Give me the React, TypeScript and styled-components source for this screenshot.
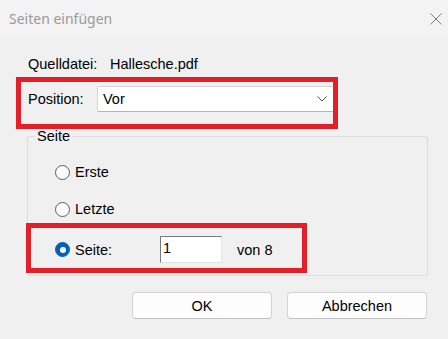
import styled, { createGlobalStyle } from "styled-components";

const GlobalStyle = createGlobalStyle`
  html, body {
    margin: 0;
    padding: 0;
    background: #f0f0f0;
  }
  body {
    font-family: "Liberation Sans", Arial, sans-serif;
    font-size: 14.5px;
    color: #000;
  }
`;

// --- Window chrome ---
const Window = styled.div`
  width: 448px;
  height: 339px;
  background: #f0f0f0;
  display: flex;
  flex-direction: column;
  overflow: hidden;
`;
const TitleBar = styled.div`
  height: 37px;
  flex-shrink: 0;
  display: flex;
  align-items: center;
  justify-content: space-between;
  padding: 0 6px 0 9px;
  background: #f3f3f3;
`;
const Title = styled.span`
  font-family: "Noto Sans", "Open Sans", sans-serif;
  font-size: 14px;
  color: #9a9a9a;
`;
const CloseButton = styled.span`
  display: flex;
  width: 12px;
  height: 12px;
`;

const Content = styled.div`
  padding: 0 0 0 16px;
  display: flex;
  flex-direction: column;
`;

// --- Rows ---
const SourceRow = styled.div`
  height: 20px;
  margin-top: 17px;
  padding-left: 12px;
  display: flex;
  align-items: center;
`;
const FieldLabel = styled.span<{ $width: number }>`
  width: ${(p) => p.$width}px;
  flex-shrink: 0;
  white-space: nowrap;
`;

// red marker drawn around a row
const Highlight = styled.div<{ $pad: string; $width: number; $offset?: number }>`
  box-sizing: border-box;
  width: ${(p) => p.$width}px;
  margin-left: ${(p) => p.$offset ?? 0}px;
  border: 5px solid #e3202a;
  padding: ${(p) => p.$pad};
  display: flex;
  align-items: center;
`;

const Select = styled.div`
  flex: 1;
  height: 26px;
  box-sizing: border-box;
  background: #fff;
  border: 1px solid #d6d6d6;
  border-bottom-color: #b4b4b4;
  border-right: none;
  border-radius: 2px 0 0 2px;
  display: flex;
  align-items: center;
  justify-content: space-between;
  padding: 0 6px 0 5px;
`;

// --- Group box ---
const Group = styled.fieldset`
  margin: 0 20px 0 11px;
  padding: 0 0 2px 0;
  border: 1px solid #dcdcdc;
  border-radius: 2px;
  min-width: 0;
`;
const Legend = styled.legend`
  margin-left: 7px;
  padding: 0 2px;
  line-height: 14px;
`;
const RadioRow = styled.div<{ $top: number }>`
  height: 20px;
  margin-top: ${(p) => p.$top}px;
  padding-left: 27px;
  display: flex;
  align-items: center;
  gap: 5px;
`;
const Radio = styled.span<{ $checked?: boolean }>`
  width: 15px;
  height: 15px;
  box-sizing: border-box;
  border-radius: 50%;
  flex-shrink: 0;
  display: flex;
  align-items: center;
  justify-content: center;
  background: ${(p) => (p.$checked ? "#0063b8" : "#fbfbfb")};
  border: 1px solid ${(p) => (p.$checked ? "#0063b8" : "#5c5c5c")};

  &::after {
    content: "";
    display: ${(p) => (p.$checked ? "block" : "none")};
    width: 6px;
    height: 6px;
    border-radius: 50%;
    background: #fff;
  }
`;
const PageInput = styled.div`
  width: 62px;
  height: 27px;
  box-sizing: border-box;
  background: #fff;
  border: 1px solid #e3e3e3;
  border-top-color: #7a7a7a;
  border-left-color: #7a7a7a;
  padding: 3px 0 0 2px;
  flex-shrink: 0;
`;
const Suffix = styled.span`
  margin-left: 15px;
`;

// --- Buttons ---
const ButtonRow = styled.div`
  margin-top: 16px;
  padding-right: 21px;
  display: flex;
  justify-content: flex-end;
  gap: 15px;
`;
const Button = styled.button`
  width: 140px;
  height: 27px;
  box-sizing: border-box;
  background: #fdfdfd;
  border: 1px solid #d3d3d3;
  border-bottom-color: #c2c2c2;
  border-radius: 4px;
  font-family: "Liberation Sans", Arial, sans-serif;
  font-size: 14.5px;
  color: #000;
  padding: 0;
`;

export default function App() {
  return (
    <>
      <GlobalStyle />
      <Window>
        <TitleBar>
          <Title>Seiten einfügen</Title>
          <CloseButton>
            <svg width="12" height="12" viewBox="0 0 12 12">
              <path d="M0.5 0.5 L11.5 11.5 M11.5 0.5 L0.5 11.5" stroke="#7d7d7d" strokeWidth="1" fill="none" />
            </svg>
          </CloseButton>
        </TitleBar>
        <Content>
          <SourceRow>
            <FieldLabel $width={82}>Quelldatei:</FieldLabel>
            <span>Hallesche.pdf</span>
          </SourceRow>

          <Highlight $width={322} $pad="4px 0 12px 7px" style={{ marginTop: 3 }}>
            <FieldLabel $width={69}>Position:</FieldLabel>
            <Select>
              <span>Vor</span>
              <svg width="10" height="6" viewBox="0 0 10 6">
                <path d="M0.5 0.5 L5 5 L9.5 0.5" stroke="#555" strokeWidth="1" fill="none" />
              </svg>
            </Select>
          </Highlight>

          <Group>
            <Legend>Seite</Legend>
            <RadioRow $top={19}>
              <Radio />
              <span>Erste</span>
            </RadioRow>
            <RadioRow $top={17}>
              <Radio />
              <span>Letzte</span>
            </RadioRow>
            <Highlight $width={281} $offset={-2} $pad="8px 0 5px 24px" style={{ marginTop: 4 }}>
              <Radio $checked />
              <FieldLabel $width={85} style={{ marginLeft: 5 }}>
                Seite:
              </FieldLabel>
              <PageInput>1</PageInput>
              <Suffix>von 8</Suffix>
            </Highlight>
          </Group>

          <ButtonRow>
            <Button>OK</Button>
            <Button>Abbrechen</Button>
          </ButtonRow>
        </Content>
      </Window>
    </>
  );
}
